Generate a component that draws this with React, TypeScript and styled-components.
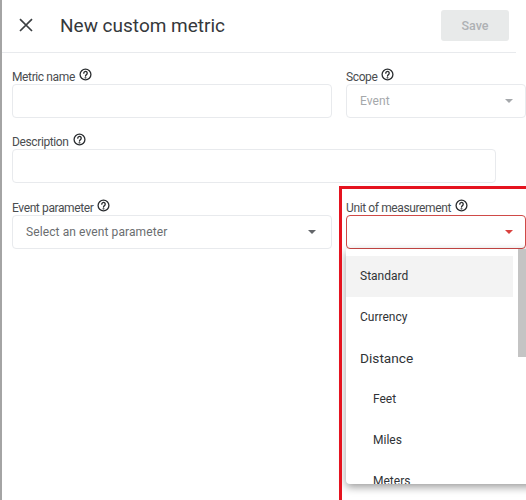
import React from "react";
import styled, { createGlobalStyle } from "styled-components";

const Global = createGlobalStyle`
  html, body { margin: 0; padding: 0; background: #fff; overflow: hidden; }
  body { font-family: Roboto, "Liberation Sans", sans-serif; color: #3c4043; }
`;

const Page = styled.div`
  position: relative;
  width: 526px;
  height: 500px;
  overflow: hidden;
  background: #fff;
  box-sizing: border-box;
  border-left: 2px solid #a4a4a4;
`;

const Header = styled.header`
  display: flex;
  align-items: center;
  width: 514px;
  height: 53px;
  box-sizing: border-box;
  border-bottom: 1px solid #e8eaed;
  padding: 0 7px 2px 16px;
`;

const CloseButton = styled.span`
  display: flex;
  width: 16px;
  height: 16px;
  margin-right: 26px;
  color: #3c4043;
`;

const Title = styled.h1`
  flex: 1;
  margin: 0;
  font-size: 19px;
  font-weight: 400;
  color: #35383b;
  letter-spacing: 0;
`;

const SaveButton = styled.button`
  width: 68px;
  height: 31px;
  border: 0;
  border-radius: 3px;
  background: #e8eaea;
  color: #aeb1b4;
  font: 500 12.5px Roboto, sans-serif;
  letter-spacing: 0;
`;

const Form = styled.div`
  display: grid;
  grid-template-columns: 320px 180px;
  column-gap: 14px;
  padding: 15px 0 0 10px;
  width: 524px;
  box-sizing: border-box;
`;

const Field = styled.div<{ $wide?: boolean }>`
  grid-column: ${(p) => (p.$wide ? "1 / span 2" : "auto")};
  width: ${(p) => (p.$wide ? "484px" : "auto")};
  margin-bottom: ${(p) => (p.$wide ? "16px" : "15px")};
`;

const Label = styled.div`
  display: flex;
  align-items: center;
  gap: 4px;
  height: 16px;
  font-size: 12px;
  letter-spacing: -0.38px;
  line-height: 16px;
  padding-top: 1px;
  box-sizing: border-box;
  color: #4a4d50;
`;

const Help = styled.svg`
  width: 13px;
  height: 13px;
  margin-top: -4px;
  flex: none;
`;

const Control = styled.div<{ $error?: boolean; $muted?: boolean }>`
  display: flex;
  align-items: center;
  justify-content: space-between;
  height: 34px;
  box-sizing: border-box;
  border: 1px solid ${(p) => (p.$error ? "#cf4a47" : "#e8eaed")};
  border-radius: 4px;
  background: #fff;
  padding: ${(p) => (p.$muted || p.$error ? "0 12px 0 13px" : "0 15px 0 13px")};
  font-size: 12px;
  letter-spacing: 0.1px;
  color: ${(p) => (p.$muted ? "#a5a8ab" : "#6a6d70")};
`;

const Arrow = styled.span<{ $color: string }>`
  width: 0;
  height: 0;
  border-left: 4px solid transparent;
  border-right: 4px solid transparent;
  border-top: 4px solid ${(p) => p.$color};
`;

const Highlight = styled.div`
  position: absolute;
  left: 337px;
  top: 186px;
  width: 200px;
  height: 330px;
  box-sizing: border-box;
  border: 3px solid #e5131f;
  pointer-events: none;
`;

const Menu = styled.div`
  position: absolute;
  left: 344px;
  top: 249px;
  width: 190px;
  height: 235px;
  overflow: hidden;
  border-radius: 0 0 4px 4px;
  background: #fff;
  box-shadow: 0 3px 8px rgba(0, 0, 0, 0.4);
  padding-top: 7px;
  box-sizing: border-box;
`;

const Scrollbar = styled.div`
  position: absolute;
  left: 172px;
  top: 0;
  width: 18px;
  height: 108px;
  background: #c4c4c4;
`;

const Item = styled.div<{ $active?: boolean; $indent?: boolean; $group?: boolean }>`
  width: 167px;
  height: 41px;
  box-sizing: border-box;
  display: flex;
  align-items: center;
  padding-left: ${(p) => (p.$indent ? "27px" : "14px")};
  padding-bottom: 2px;
  background: ${(p) => (p.$active ? "#f3f3f3" : "transparent")};
  font-size: ${(p) => (p.$group ? "13.7px" : "12px")};
  color: #303336;
`;

const HelpIcon = () => (
  <Help viewBox="0 0 24 24" fill="none" stroke="#2a2d30" strokeWidth="2.4" strokeLinecap="round">
    <circle cx="12" cy="12" r="10" />
    <path d="M8.8 9.6a3.2 3.2 0 1 1 5 2.6c-1.1.8-1.8 1.4-1.8 2.6" />
    <circle cx="12" cy="17.8" r="0.5" fill="#2a2d30" />
  </Help>
);

export default function App() {
  return (
    <>
      <Global />
      <Page>
        <Header>
          <CloseButton>
            <svg viewBox="0 0 16 16" width="16" height="16" fill="none" stroke="currentColor" strokeWidth="1.7">
              <path d="M2 2.2 14 14M14 2.2 2 14" />
            </svg>
          </CloseButton>
          <Title>New custom metric</Title>
          <SaveButton disabled>Save</SaveButton>
        </Header>
        <Form>
          <Field>
            <Label>Metric name <HelpIcon /></Label>
            <Control />
          </Field>
          <Field>
            <Label>Scope <HelpIcon /></Label>
            <Control $muted>
              Event
              <Arrow $color="#a5a8ab" />
            </Control>
          </Field>
          <Field $wide>
            <Label>Description <HelpIcon /></Label>
            <Control />
          </Field>
          <Field>
            <Label>Event parameter <HelpIcon /></Label>
            <Control>
              Select an event parameter
              <Arrow $color="#63666a" />
            </Control>
          </Field>
          <Field>
            <Label>Unit of measurement <HelpIcon /></Label>
            <Control $error>
              <span />
              <Arrow $color="#d9423f" />
            </Control>
          </Field>
        </Form>
        <Menu>
          <Scrollbar />
          <Item $active>Standard</Item>
          <Item>Currency</Item>
          <Item $group>Distance</Item>
          <Item $indent>Feet</Item>
          <Item $indent>Miles</Item>
          <Item $indent>Meters</Item>
        </Menu>
        <Highlight />
      </Page>
    </>
  );
}
